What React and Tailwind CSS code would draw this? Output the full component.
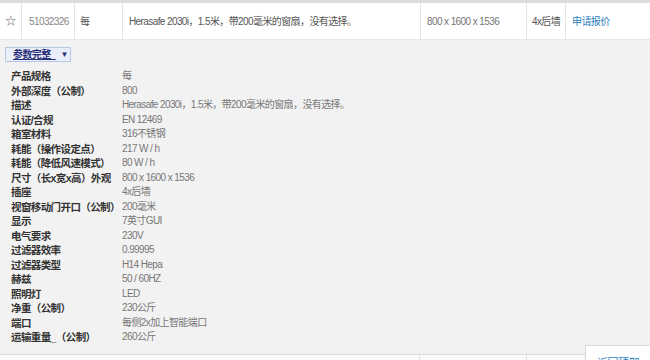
import React from 'react';

const specs = [
  ['产品规格', '每'],
  ['外部深度（公制）', '800'],
  ['描述', 'Herasafe 2030i，1.5米，带200毫米的窗扇，没有选择。'],
  ['认证/合规', 'EN 12469'],
  ['箱室材料', '316不锈钢'],
  ['耗能（操作设定点）', '217 W / h'],
  ['耗能（降低风速模式）', '80 W / h'],
  ['尺寸（长x宽x高）外观', '800 x 1600 x 1536'],
  ['插座', '4x后墙'],
  ['视窗移动门开口（公制）', '200毫米'],
  ['显示', '7英寸GUI'],
  ['电气要求', '230V'],
  ['过滤器效率', '0.99995'],
  ['过滤器类型', 'H14 Hepa'],
  ['赫兹', '50 / 60HZ'],
  ['照明灯', 'LED'],
  ['净重（公制）', '230公斤'],
  ['端口', '每侧2x加上智能端口'],
  ['运输重量_（公制）', '260公斤'],
];

export default function App() {
  return (
    <div
      className="relative w-[650px] h-[360px] overflow-hidden bg-[#f2f2f2] text-[10px] tracking-[-0.6px]"
      style={{ fontFamily: '"Liberation Sans", Arial, "Noto Sans CJK SC", sans-serif' }}
    >
      {/* product row */}
      <div className="flex h-[40px] bg-white border-t-[3px] border-[#dcdcdc] border-b border-b-[#e8e8e8] text-[#666] whitespace-nowrap">
        <div className="w-[22px] flex items-center justify-center border-r border-[#e3e3e3] text-[#666] text-[11px]">☆</div>
        <div className="w-[53px] flex items-center pl-[7px] border-r border-[#e3e3e3] text-[#888]">51032326</div>
        <div className="w-[48px] flex items-center pl-[5px] border-r border-[#e3e3e3] text-[#555]">每</div>
        <div className="w-[298px] flex items-center pl-[6px] border-r border-[#e3e3e3] text-[#555]">
          Herasafe 2030i，1.5米，带200毫米的窗扇，没有选择。
        </div>
        <div className="w-[106px] flex items-center pl-[6px] border-r border-[#e3e3e3] text-[#777]">800 x 1600 x 1536</div>
        <div className="w-[39px] flex items-center pl-[5px] border-r border-[#e3e3e3] text-[#555]">4x后墙</div>
        <div className="flex-1 flex items-center pl-[6px] text-[#2d7fc1]">申请报价</div>
      </div>

      {/* details */}
      <div className="px-[5px] pt-[7px]">
        <button className="h-[15px] w-[66px] pl-[7px] flex items-center gap-[5px] whitespace-nowrap bg-[#e9eef8] border border-[#b8c7e3] text-[#2a2f7a] text-[10px] font-bold leading-none">
          <span className="underline">参数完整_</span>
          <span className="text-[8px]">▼</span>
        </button>

        <div className="mt-[7px] pl-[6px]">
          {specs.map(([label, value]) => (
            <div key={label} className="flex h-[14.5px] items-center leading-[14.5px] whitespace-nowrap">
              <div className="w-[111px] font-bold text-[#333] text-[10.5px]">{label}</div>
              <div className="text-[#777]">{value}</div>
            </div>
          ))}
        </div>
      </div>

      {/* next table row peeking */}
      <div className="mt-[9px] flex h-[20px] bg-[#fafafa] border-t border-[#dcdcdc]">
        <div className="w-[420px] border-r border-[#e3e3e3]" />
        <div className="w-[107px] border-r border-[#e3e3e3]" />
        <div className="flex-1" />
      </div>

      {/* back to top tab */}
      <div className="absolute right-0 bottom-[-6px] w-[65px] h-[21px] bg-white border-l border-t border-[#d8d8d8] flex justify-center pt-[9px] text-[#2d7fc1] text-[11px]">
        返回顶部
      </div>
    </div>
  );
}
